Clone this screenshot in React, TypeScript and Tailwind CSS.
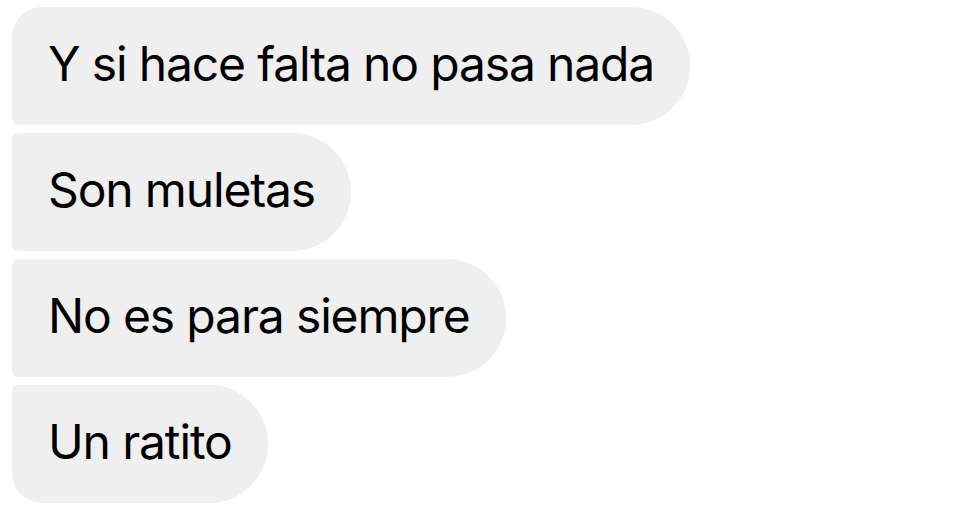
const messages = [
  { text: 'Y si hace falta no pasa nada', corners: 'rounded-tl-[30px] rounded-bl-[6px]' },
  { text: 'Son muletas', corners: 'rounded-tl-[6px] rounded-bl-[6px]' },
  { text: 'No es para siempre', corners: 'rounded-tl-[6px] rounded-bl-[6px]' },
  { text: 'Un ratito', corners: 'rounded-tl-[6px] rounded-bl-[30px]' },
];

export default function App() {
  return (
    <div className="w-[968px] h-[521px] bg-white pl-3 pt-[7px] flex flex-col items-start gap-2 font-['Inter',sans-serif]">
      {messages.map((m) => (
        <div
          key={m.text}
          className={`h-[118px] flex items-center pl-9 pr-9 pb-1 bg-[#efefef] rounded-r-[59px] ${m.corners}`}
        >
          <span className="text-[48px] leading-none text-black tracking-[-1.15px]">{m.text}</span>
        </div>
      ))}
    </div>
  );
}
